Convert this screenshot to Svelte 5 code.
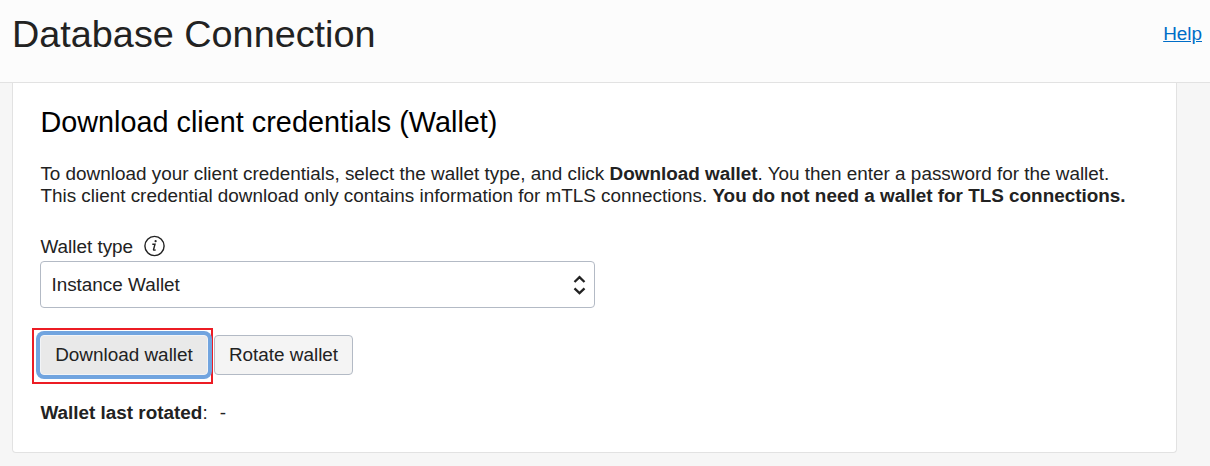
<script lang="ts">
  const walletType = 'Instance Wallet';
</script>

<div class="page">
  <header>
    <h1>Database Connection</h1>
    <a href="#help">Help</a>
  </header>
  <main>
    <h2>Download client credentials (Wallet)</h2>
    <p>To download your client credentials, select the wallet type, and click <b>Download wallet</b>. You then enter a password for the wallet.<br />This client credential download only contains information for mTLS connections. <b>You do not need a wallet for TLS connections.</b></p>
    <div class="label">
      <span>Wallet type</span>
      <svg width="22" height="22" viewBox="0 0 22 22" fill="none" stroke="#222" stroke-width="1.4">
        <circle cx="11.5" cy="11" r="9.6" />
        <path d="M9.3 9.3h2.7l-1.5 5.4q-.1.8 2.2.2" />
        <circle cx="12.6" cy="6.2" r="1.1" fill="#222" stroke="none" />
      </svg>
    </div>
    <div class="select">
      <span>{walletType}</span>
      <svg width="14" height="22" viewBox="0 0 14 22" fill="none" stroke="#222" stroke-width="2.3">
        <path d="M2.5 8L7.5 3.2l5 4.8M2.5 14.4l5 4.8 5-4.8" />
      </svg>
    </div>
    <div class="actions">
      <div class="mark"><button class="focused">Download wallet</button></div>
      <button class="rotate">Rotate wallet</button>
    </div>
    <div class="status"><b>Wallet last rotated</b>:<span>-</span></div>
  </main>
</div>

<style>
  .page { box-sizing: border-box; width: 1210px; height: 466px; background: #f6f6f6; overflow: hidden; font-family: "Liberation Sans", Arial, sans-serif; font-size: 18.9px; color: #222; }
  header { box-sizing: border-box; height: 83px; background: #fcfcfc; border-bottom: 1px solid #e2e2e2; display: flex; justify-content: space-between; padding: 0 8px 0 12px; }
  h1 { margin: 12px 0 0; font-size: 37.8px; line-height: 44px; font-weight: 400; }
  a { margin-top: 23px; line-height: 22px; color: #006dc7; height: 22px; }
  main { box-sizing: border-box; width: 1165px; height: 370px; margin-left: 12px; padding: 22px 27px; background: #fff; border: 1px solid #e2e2e2; border-top: 0; border-radius: 0 0 4px 4px; }
  h2 { margin: 0; padding-left: 0.4px; font-size: 28.8px; line-height: 34px; font-weight: 400; color: #000; letter-spacing: 0.01px; }
  p { margin: 24px 0 0; padding-left: 0.4px; line-height: 22px; white-space: nowrap; }
  .label { display: flex; align-items: center; gap: 10px; height: 22px; margin-top: 28px; }
  .label span { padding: 1px 0 0 0.4px; }
  .select { box-sizing: border-box; width: 555px; height: 47px; margin-top: 4px; padding: 0 8px 0 10.4px; border: 1px solid #b3bac5; border-radius: 4px; display: flex; align-items: center; justify-content: space-between; }
  .actions { display: flex; margin: 20px 0 0 -8px; height: 56px; }
  .mark { box-sizing: border-box; width: 181px; height: 56px; border: 2px solid #ec1c24; padding: 5px 6px; }
  button { box-sizing: border-box; display: block; font: inherit; color: inherit; padding: 0; border: 1px solid #b3bac5; border-radius: 4px; height: 40px; width: 139px; background: #f4f4f4; white-space: nowrap; }
  .focused { width: 168px; background: #e9e9e9; border-color: #f2f4f7; box-shadow: 0 0 0 4px #71a4df; }
  .rotate { margin: 7px 0 0 1px; }
  .status { margin-top: 18px; padding-left: 0.4px; line-height: 22px; }
  .status span { margin-left: 12px; }
</style>
